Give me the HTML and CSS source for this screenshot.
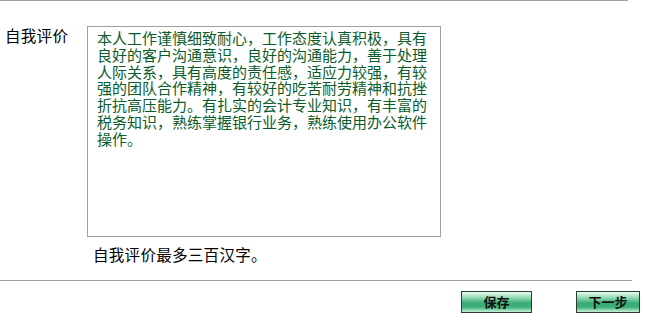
FILE: index.html
```html
<!DOCTYPE html>
<html lang="zh-CN">
<head>
<meta charset="utf-8">
<title>自我评价</title>
<link rel="stylesheet" href="styles.css">
</head>
<body>
<div class="page">
  <div class="rule rule-top"></div>
  <div class="form-row">
    <div class="label">自我评价</div>
    <div class="field">
      <textarea class="eval" readonly>本人工作谨慎细致耐心，工作态度认真积极，具有良好的客户沟通意识，良好的沟通能力，善于处理人际关系，具有高度的责任感，适应力较强，有较强的团队合作精神，有较好的吃苦耐劳精神和抗挫折抗高压能力。有扎实的会计专业知识，有丰富的税务知识，熟练掌握银行业务，熟练使用办公软件操作。</textarea>
      <div class="hint">自我评价最多三百汉字。</div>
    </div>
  </div>
  <div class="rule rule-bottom"></div>
  <div class="actions">
    <button class="btn btn-save" type="button">保存</button>
    <button class="btn btn-next" type="button">下一步</button>
  </div>
</div>
</body>
</html>
```

FILE: styles.css
```css
html, body {
  margin: 0;
  padding: 0;
  background: #ffffff;
}

.page {
  width: 647px;
  height: 323px;
  font-family: "Noto Sans CJK SC", "Noto Sans", sans-serif;
  color: #000;
}

.rule {
  height: 1px;
  background: #a3a3a3;
}

.rule-top {
  width: 628px;
}

.rule-bottom {
  width: 632px;
  margin-top: 17px;
}

.form-row {
  display: flex;
  padding-top: 25px;
}

.label {
  width: 82px;
  padding-left: 5px;
  font-size: 15.5px;
  line-height: 18px;
  letter-spacing: 0.3px;
}

.field {
  display: flex;
  flex-direction: column;
}

.eval {
  box-sizing: border-box;
  width: 354px;
  height: 211px;
  margin: 0;
  padding: 3px 4px 0 9px;
  border: 1px solid #a0a0a0;
  resize: none;
  overflow: hidden;
  font-family: "Noto Sans CJK SC", "Noto Sans", sans-serif;
  font-size: 15px;
  line-height: 16.8px;
  color: #0a5c2c;
  background: #fff;
  outline: none;
}

.hint {
  margin-top: 8px;
  padding-left: 6px;
  font-size: 15.5px;
  line-height: 18px;
  letter-spacing: 0.3px;
}

.actions {
  display: flex;
  justify-content: flex-end;
  gap: 44px;
  padding: 10px 7px 0 0;
}

.btn {
  box-sizing: border-box;
  height: 22px;
  padding: 0;
  border: 1px solid #2c3a33;
  background: linear-gradient(to bottom, #e6fbef 0%, #a8e4c4 22%, #3aac74 55%, #3cb078 75%, #c4f0d8 100%);
  font-family: "Noto Sans CJK SC", "Noto Sans", sans-serif;
  font-size: 13px;
  font-weight: bold;
  line-height: 20px;
  color: #111;
  cursor: pointer;
}

.btn-save {
  width: 71px;
}

.btn-next {
  width: 64px;
}
```
